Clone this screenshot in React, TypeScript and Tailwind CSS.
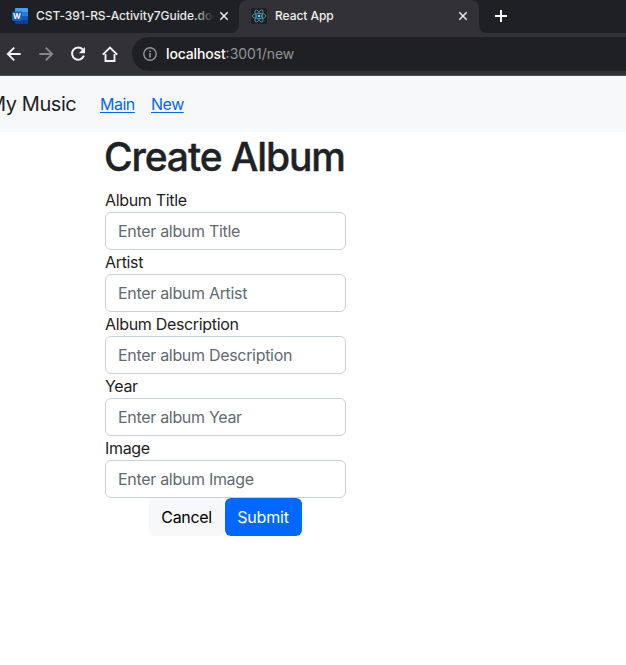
import type { ReactNode } from "react";

function Icon({ size, stroke, width = 2, children }: { size: number; stroke: string; width?: number; children: ReactNode }) {
  return (
    <svg width={size} height={size} viewBox={`0 0 ${size} ${size}`} fill="none" stroke={stroke} strokeWidth={width} className="block shrink-0">
      {children}
    </svg>
  );
}

function CloseIcon() {
  return (
    <Icon size={16} stroke="#e8eaed" width={1.5}>
      <path d="M4.3 4.3 L11.7 11.7 M11.7 4.3 L4.3 11.7" />
    </Icon>
  );
}

function WordIcon() {
  return (
    <svg width="16" height="16" viewBox="0 0 16 16" className="block shrink-0">
      <path d="M4 0h11a1 1 0 0 1 1 1v3.5H3V1a1 1 0 0 1 1-1z" fill="#41a5ee" />
      <path d="M3 4.2h13V8H3z" fill="#2b7cd3" />
      <path d="M3 8h13v4H3z" fill="#185abd" />
      <path d="M3 12h13v3a1 1 0 0 1-1 1H4a1 1 0 0 1-1-1z" fill="#103f91" />
      <rect x="0" y="3.5" width="10" height="9.5" rx="1" fill="#185abd" />
      <text x="5" y="11" textAnchor="middle" fontFamily="Inter, sans-serif" fontSize="7.5" fontWeight="700" fill="#fff">W</text>
    </svg>
  );
}

function ReactIcon() {
  return (
    <svg width="16" height="16" viewBox="0 0 16 16" fill="none" stroke="#469fb4" strokeWidth="0.8" className="block shrink-0">
      <rect width="16" height="16" rx="1.5" fill="#202124" stroke="none" />
      <ellipse cx="8" cy="8" rx="6.8" ry="2.6" />
      <ellipse cx="8" cy="8" rx="6.8" ry="2.6" transform="rotate(60 8 8)" />
      <ellipse cx="8" cy="8" rx="6.8" ry="2.6" transform="rotate(120 8 8)" />
      <circle cx="8" cy="8" r="1.3" fill="#61dafb" stroke="none" />
    </svg>
  );
}

function TabStrip() {
  return (
    <div className="flex h-[33px] bg-[#1f2023] text-[12px] font-medium leading-4">
      <div className="flex w-[239px] shrink-0 rounded-br-lg bg-[#1f2023] pl-3 pt-2">
        <WordIcon />
        <div className="relative ml-2 w-[178px] overflow-hidden whitespace-nowrap tracking-[-0.06px] text-[#e8eaed]">
          CST-391-RS-Activity7Guide.docx
          <div className="absolute inset-y-0 right-0 w-5 bg-linear-to-r from-transparent to-[#1f2023]" />
        </div>
        <div className="ml-[2px]">
          <CloseIcon />
        </div>
      </div>
      <div className="relative flex w-[240px] shrink-0 rounded-t-lg bg-[#323136] pl-3 pt-2">
        <ReactIcon />
        <span className="ml-2 tracking-[-0.06px] text-[#f1f3f4]">React App</span>
        <div className="ml-auto mr-2">
          <CloseIcon />
        </div>
        <svg width="8" height="8" className="absolute -left-2 bottom-0">
          <path d="M8 0A8 8 0 0 1 0 8H8z" fill="#323136" />
        </svg>
        <svg width="8" height="8" className="absolute -right-2 bottom-0">
          <path d="M0 0A8 8 0 0 0 8 8H0z" fill="#323136" />
        </svg>
      </div>
      <div className="ml-[14px] pt-2">
        <Icon size={16} stroke="#fff">
          <path d="M8 2v12M2 8h12" />
        </Icon>
      </div>
    </div>
  );
}

function Toolbar() {
  return (
    <div className="flex h-[43px] border-b border-[#535258] bg-[#323136] pt-1">
      <div className="flex w-[132px] shrink-0 gap-4 pl-[6px] pt-[9px]">
        <Icon size={16} stroke="#f1f3f4" width={1.9}>
          <path d="M14.7 8H2M8.2 1.6L1.8 8l6.4 6.4" />
        </Icon>
        <Icon size={16} stroke="#87868b" width={1.9}>
          <path d="M1.3 8H14M7.8 1.6L14.2 8l-6.4 6.4" />
        </Icon>
        <Icon size={16} stroke="#f1f3f4">
          <path d="M12.8 3.6A6.1 6.1 0 1 0 13.9 9.7" />
          <path d="M15 1v6.2H8.8z" fill="#f1f3f4" stroke="none" />
        </Icon>
        <Icon size={16} stroke="#f1f3f4" width={1.9}>
          <path d="M3.5 8v7h9V8M.8 8.7L8 1.5l7.2 7.2" />
        </Icon>
      </div>
      <div className="flex h-[34px] flex-1 items-center rounded-l-full bg-[#1f2023] pl-[10px] text-[14px]">
        <Icon size={16} stroke="#919499" width={1.4}>
          <circle cx="8" cy="8" r="6.2" />
          <path d="M8 7v4.4M8 4.4v1.6" strokeWidth="1.6" />
        </Icon>
        <span className="mb-[2px] ml-2 font-medium tracking-[-0.14px] text-white">localhost</span>
        <span className="mb-[2px] text-[#939498]">:3001/new</span>
      </div>
    </div>
  );
}

function NavBar() {
  return (
    <nav className="flex h-14 items-center overflow-hidden bg-[#f7f8fa]">
      <a className="-ml-3 w-[112px] shrink-0 whitespace-nowrap text-[20px] tracking-[-0.43px]">My Music</a>
      <a className="w-[51px] text-[#0068f5] underline decoration-1 underline-offset-2 tracking-[-0.48px]">Main</a>
      <a className="text-[#0068f5] underline decoration-1 underline-offset-2 tracking-[-0.48px]">New</a>
    </nav>
  );
}

const fields = ["Title", "Artist", "Description", "Year", "Image"];
const labels = ["Album Title", "Artist", "Album Description", "Year", "Image"];

export default function App() {
  return (
    <div className="h-[665px] w-[626px] overflow-hidden bg-white font-['Inter','Liberation_Sans',sans-serif] text-base text-[#1e2225]">
      <TabStrip />
      <Toolbar />
      <NavBar />
      <main className="ml-[105px] w-[241px] tracking-[-0.33px]">
        <h1 className="-ml-px mb-[7px] whitespace-nowrap pt-px text-[39px] font-medium leading-[48px] tracking-[-1.12px] [-webkit-text-stroke:0.4px_#1e2225]">Create Album</h1>
        <form>
          {fields.map((field, i) => (
            <div key={field}>
              <label className="block h-6 leading-6">{labels[i]}</label>
              <input
                className="block h-[38px] w-full rounded-md border border-[#c9cfd6] bg-white px-3 tracking-[-0.31px] outline-none placeholder:text-[#626a72]"
                placeholder={`Enter album ${field}`}
              />
            </div>
          ))}
          <div className="flex justify-center">
            <button type="button" className="h-[38px] w-[76px] rounded-md bg-[#f7f8fa] pr-px tracking-[-0.35px] text-black">Cancel</button>
            <button type="button" className="h-[38px] w-[77px] rounded-md bg-[#0068ff] pr-px tracking-[-0.2px] text-white">Submit</button>
          </div>
        </form>
      </main>
    </div>
  );
}
